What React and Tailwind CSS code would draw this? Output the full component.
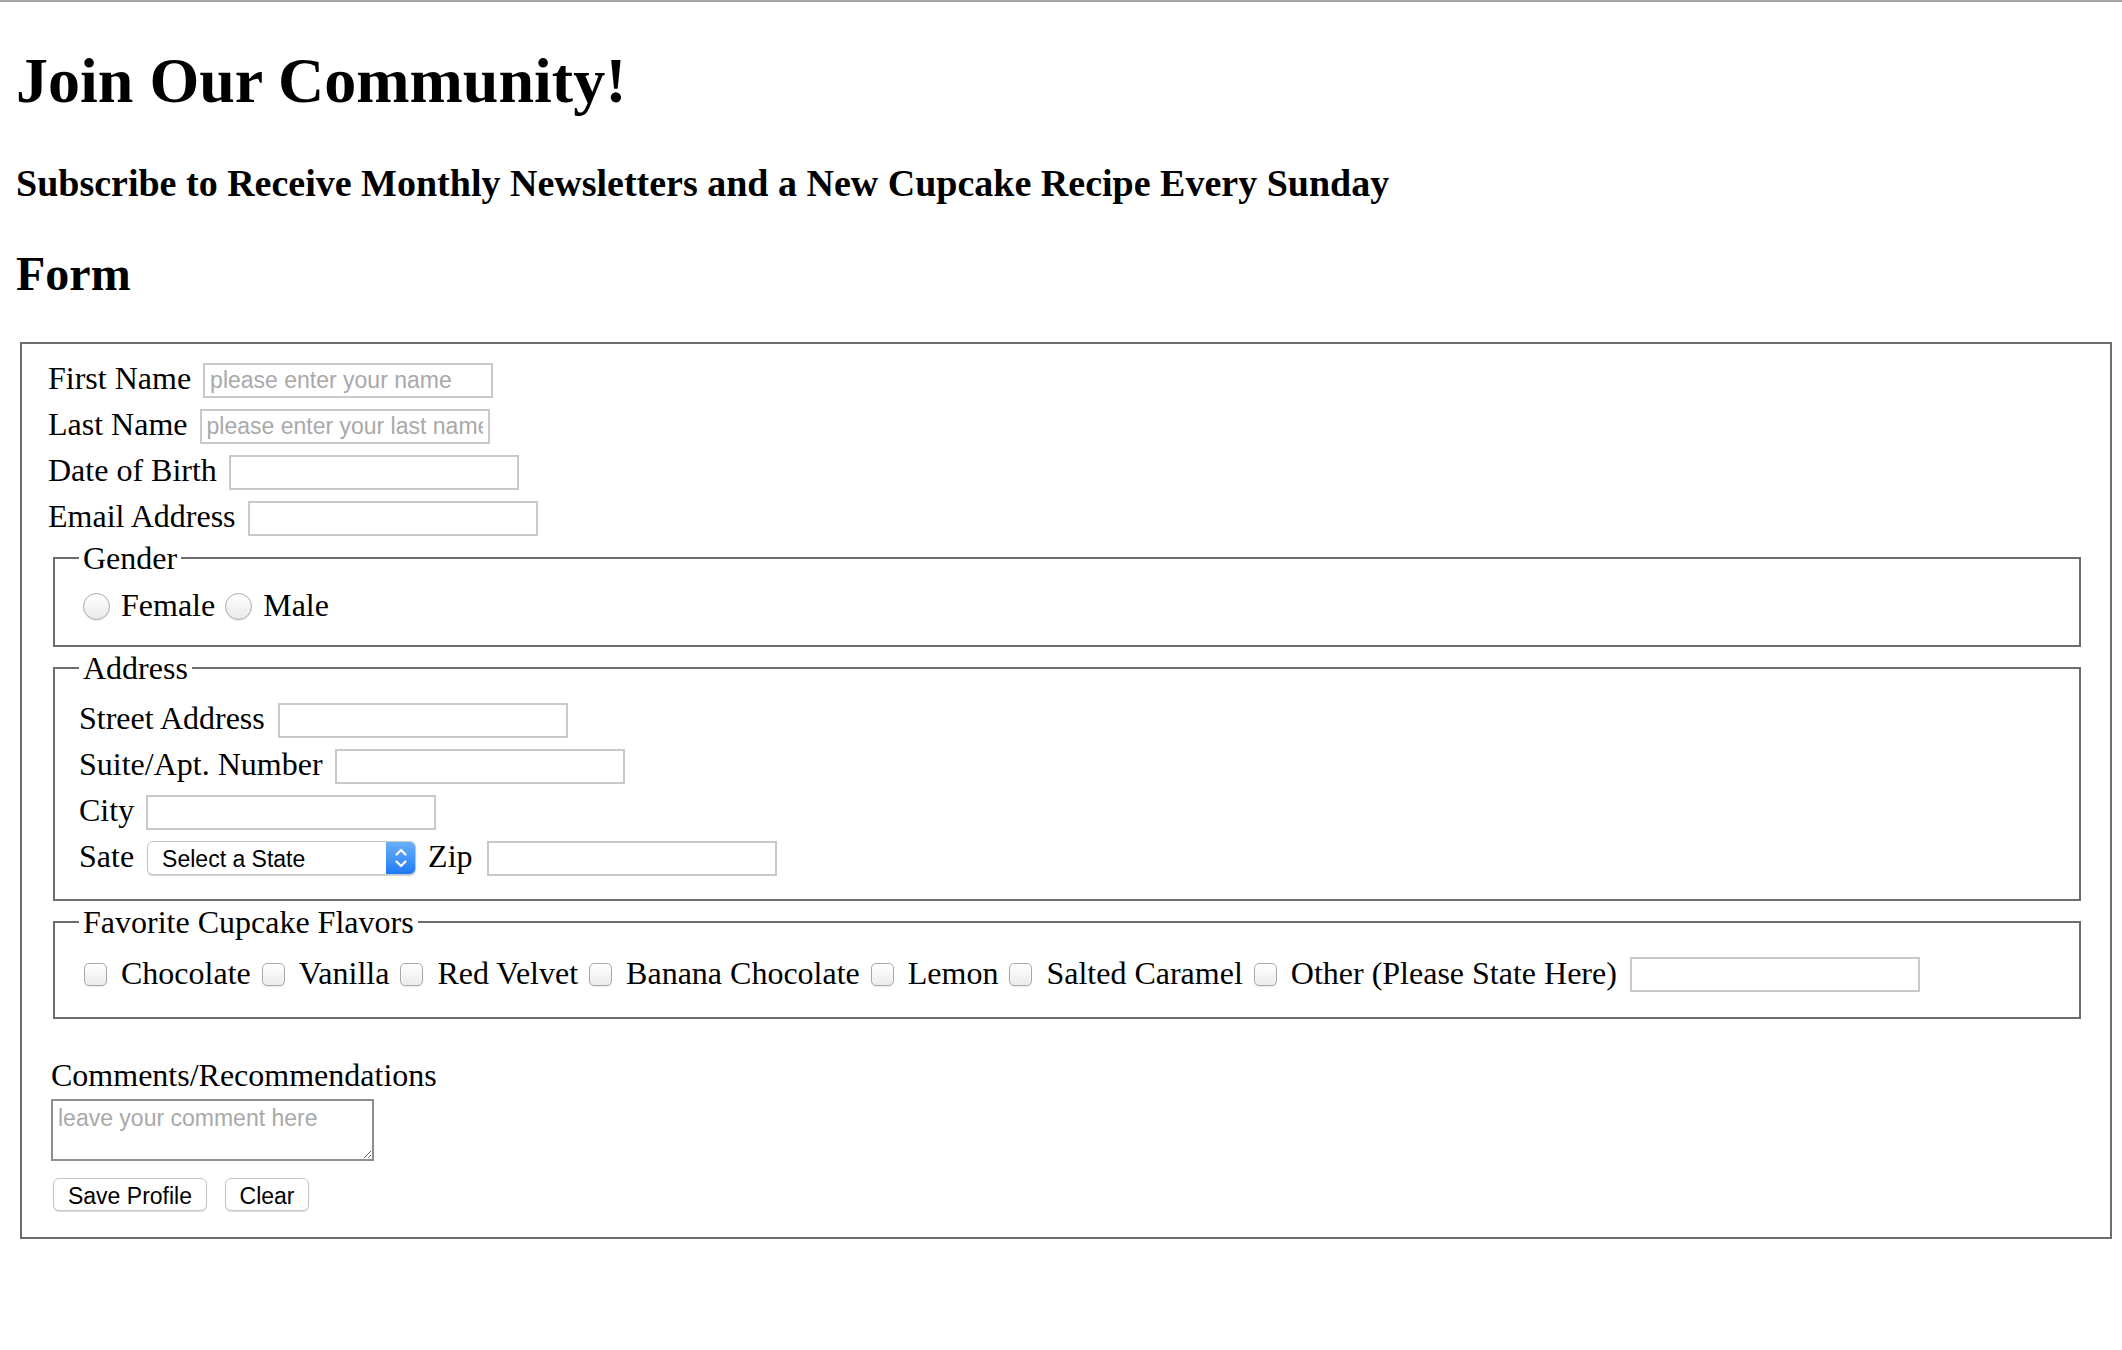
import React from 'react';

const sans = "font-['Liberation_Sans',Arial,sans-serif]";
const field = `${sans} h-[35px] w-[290px] border-2 border-[#c9c9c9] bg-white px-[5px] text-[23px] text-black placeholder:text-[#a9a9a9] outline-none`;
const legend = 'px-[4px] text-[32px] leading-[32px]';
const row = 'flex h-[46px] items-center';
const label = 'pb-[4px] text-[32px] leading-[37px]';

function Checkbox({ first }) {
  return (
    <input
      type="checkbox"
      className={`${first ? 'ml-[5px]' : 'ml-[11px]'} h-[23px] w-[23px] shrink-0 appearance-none rounded-[5px] border border-[#a9a9a9] bg-gradient-to-b from-white to-[#ececec] shadow-[0_1px_1px_rgba(0,0,0,0.08)]`}
    />
  );
}

function Radio({ first }) {
  return (
    <input
      type="radio"
      name="gender"
      className={`${first ? 'ml-[4px]' : 'ml-[10px]'} h-[27px] w-[27px] shrink-0 appearance-none rounded-full border border-[#a9a9a9] bg-gradient-to-b from-white to-[#e9e9e9] shadow-[0_1px_1px_rgba(0,0,0,0.08)]`}
    />
  );
}

export default function App() {
  const flavors = ['Chocolate', 'Vanilla', 'Red Velvet', 'Banana Chocolate', 'Lemon', 'Salted Caramel', 'Other (Please State Here)'];

  return (
    <div className="min-h-screen border-t-2 border-[#a3a3a3] bg-white font-['Liberation_Serif','Times_New_Roman',serif] text-black">
      {/* Headings */}
      <h1 className="ml-[16px] mt-[42px] text-[64px] font-bold leading-[74px]">Join Our Community!</h1>
      <h3 className="ml-[16px] mt-[44px] text-[38px] font-bold leading-[43px]">
        Subscribe to Receive Monthly Newsletters and a New Cupcake Recipe Every Sunday
      </h3>
      <h2 className="ml-[16px] mt-[41px] text-[48px] font-bold leading-[55px]">Form</h2>

      {/* Form */}
      <form className="ml-[20px] mr-[10px] mt-[41px]">
        <fieldset className="border-2 border-[#6d6d6d] px-[26px] pb-[26px] pt-[13px]">
          <div className={row}>
            <label className={label}>First Name</label>
            <input className={`ml-[12px] ${field}`} placeholder="please enter your name" />
          </div>
          <div className={row}>
            <label className={label}>Last Name</label>
            <input className={`ml-[12px] ${field}`} placeholder="please enter your last name" />
          </div>
          <div className={row}>
            <label className={label}>Date of Birth</label>
            <input className={`ml-[12px] ${field}`} />
          </div>
          <div className={row}>
            <label className={label}>Email Address</label>
            <input className={`ml-[12px] ${field}`} />
          </div>

          {/* Gender */}
          <fieldset className="ml-[5px] mr-[3px] mt-[1px] border-2 border-[#6d6d6d] px-[24px] pb-[16px] pt-[9px]">
            <legend className={legend}>Gender</legend>
            <div className={`${row} text-[32px]`}>
              <Radio first />
              <span className="ml-[11px] pb-[2px] leading-[37px]">Female</span>
              <Radio />
              <span className="ml-[11px] pb-[2px] leading-[37px]">Male</span>
            </div>
          </fieldset>

          {/* Address */}
          <fieldset className="ml-[5px] mr-[3px] mt-[5px] border-2 border-[#6d6d6d] px-[24px] pb-[18px] pt-[13px]">
            <legend className={legend}>Address</legend>
            <div className={row}>
              <label className={label}>Street Address</label>
              <input className={`ml-[13px] ${field}`} />
            </div>
            <div className={row}>
              <label className={label}>Suite/Apt. Number</label>
              <input className={`ml-[12px] ${field}`} />
            </div>
            <div className={row}>
              <label className={label}>City</label>
              <input className={`ml-[12px] ${field}`} />
            </div>
            <div className={row}>
              <label className={label}>Sate</label>
              <div className="ml-[13px] flex h-[34px] w-[269px] overflow-hidden rounded-[6px] border border-[#c6c6c6] bg-white shadow-[0_1px_1px_rgba(0,0,0,0.18)]">
                <select className={`${sans} flex-1 appearance-none bg-transparent pl-[14px] text-[23px] text-black outline-none`}>
                  <option>Select a State</option>
                </select>
                <div className="flex w-[29px] items-center justify-center bg-gradient-to-b from-[#69b0fb] to-[#1c7af5]">
                  <svg width="16" height="28" viewBox="0 0 16 28" fill="none" stroke="white" strokeWidth="2.2" strokeLinecap="round" strokeLinejoin="round">
                    <path d="M3.5 10.5 L8 6 L12.5 10.5" />
                    <path d="M3.5 17.5 L8 22 L12.5 17.5" />
                  </svg>
                </div>
              </div>
              <label className={`ml-[12px] ${label}`}>Zip</label>
              <input className={`ml-[14px] ${field}`} />
            </div>
          </fieldset>

          {/* Flavors */}
          <fieldset className="ml-[5px] mr-[3px] mt-[5px] border-2 border-[#6d6d6d] px-[24px] pb-[20px] pt-[13px]">
            <legend className={legend}>Favorite Cupcake Flavors</legend>
            <div className={`${row} text-[32px]`}>
              {flavors.map((f, i) => (
                <React.Fragment key={f}>
                  <Checkbox first={i === 0} />
                  <span className="ml-[14px] whitespace-nowrap pb-[2px] leading-[37px]">{f}</span>
                </React.Fragment>
              ))}
              <input className={`ml-[13px] ${field}`} />
            </div>
          </fieldset>

          {/* Comments */}
          <label className="ml-[3px] mt-[38px] block text-[32px] leading-[37px]">Comments/Recommendations</label>
          <textarea
            className={`${sans} ml-[3px] mt-[5px] block h-[62px] w-[323px] border-2 border-[#8e8e8e] px-[5px] pt-[3px] text-[23px] leading-[28px] placeholder:text-[#a9a9a9] outline-none`}
            placeholder="leave your comment here"
          />
          <div className="mt-[17px] flex">
            <button type="button" className={`${sans} ml-[5px] h-[33px] w-[154px] rounded-[6px] border border-[#c6c6c6] bg-white text-[23px] shadow-[0_1px_1px_rgba(0,0,0,0.15)]`}>
              Save Profile
            </button>
            <button type="button" className={`${sans} ml-[18px] h-[33px] w-[84px] rounded-[6px] border border-[#c6c6c6] bg-white text-[23px] shadow-[0_1px_1px_rgba(0,0,0,0.15)]`}>
              Clear
            </button>
          </div>
        </fieldset>
      </form>
    </div>
  );
}
